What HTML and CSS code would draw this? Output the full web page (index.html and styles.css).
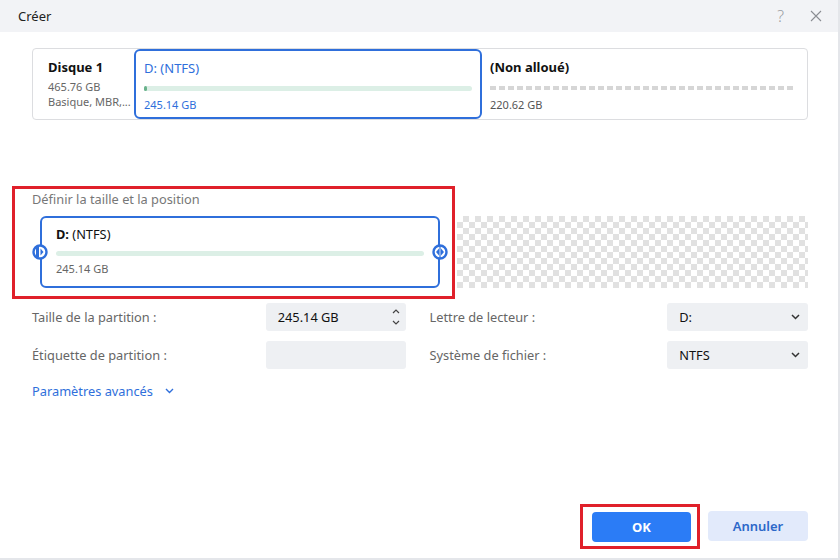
FILE: index.html
```html
<!DOCTYPE html>
<html lang="fr">
<head>
<meta charset="utf-8">
<link rel="stylesheet" href="styles.css">
</head>
<body>
<div class="dialog">
  <div class="titlebar">
    <span class="title">Créer</span>
    <div class="tb-icons">
      <span class="help">?</span>
      <svg class="close" width="12" height="12" viewBox="0 0 12 12"><path d="M1 1L11 11M11 1L1 11" stroke="#8a8d93" stroke-width="1.1" fill="none"/></svg>
    </div>
  </div>
  <div class="content">
    <div class="diskmap">
      <div class="disk-info">
        <div class="disk-name">Disque 1</div>
        <div class="disk-sub">465.76 GB</div>
        <div class="disk-sub">Basique, MBR,...</div>
      </div>
      <div class="part part-sel">
        <div class="part-name blue">D: (NTFS)</div>
        <div class="bar"><div class="bar-used"></div></div>
        <div class="part-size blue">245.14 GB</div>
      </div>
      <div class="part part-free">
        <div class="part-name bold">(Non alloué)</div>
        <div class="dashbar"></div>
        <div class="part-size">220.62 GB</div>
      </div>
    </div>

    <div class="resize-section">
      <div class="highlight">
        <div class="section-label">Définir la taille et la position</div>
      </div>
      <div class="resize-row">
        <div class="rcard">
          <svg class="handle h-left" width="16" height="16" viewBox="0 0 16 16"><circle cx="8" cy="8" r="6.5" fill="#fff" stroke="#2f6fdb" stroke-width="2.4"/><rect x="4" y="3" width="3" height="10" fill="#2f6fdb"/><path d="M8.5 4.5L11.5 8L8.5 11.5Z" fill="#2f6fdb"/></svg>
          <div class="rcard-name"><b>D:</b> (NTFS)</div>
          <div class="bar rbar"></div>
          <div class="rcard-size">245.14 GB</div>
          <svg class="handle h-right" width="16" height="16" viewBox="0 0 16 16"><circle cx="8" cy="8" r="6.5" fill="#fff" stroke="#2f6fdb" stroke-width="2.4"/><path d="M7 4.5L4 8L7 11.5Z" fill="#2f6fdb"/><path d="M9 4.5L12 8L9 11.5Z" fill="#2f6fdb"/><rect x="7.4" y="1" width="1.2" height="14" fill="#2f6fdb"/></svg>
        </div>
        <div class="checker"></div>
      </div>
    </div>

    <div class="form">
      <div class="frow">
        <span class="flabel">Taille de la partition :</span>
        <div class="field spin">
          <span>245.14 GB</span>
          <svg width="8" height="18" viewBox="0 0 8 18"><path d="M1 5L4 2L7 5M1 13L4 16L7 13" stroke="#444" stroke-width="1.2" fill="none"/></svg>
        </div>
        <span class="flabel flabel2">Lettre de lecteur :</span>
        <div class="field select">
          <span>D:</span>
          <svg width="9" height="6" viewBox="0 0 9 6"><path d="M1 1L4.5 4.5L8 1" stroke="#333" stroke-width="1.5" fill="none"/></svg>
        </div>
      </div>
      <div class="frow">
        <span class="flabel">Étiquette de partition :</span>
        <div class="field"></div>
        <span class="flabel flabel2">Système de fichier :</span>
        <div class="field select">
          <span>NTFS</span>
          <svg width="9" height="6" viewBox="0 0 9 6"><path d="M1 1L4.5 4.5L8 1" stroke="#333" stroke-width="1.5" fill="none"/></svg>
        </div>
      </div>
      <div class="adv">
        <span>Paramètres avancés</span>
        <svg width="9" height="6" viewBox="0 0 9 6"><path d="M1 1L4.5 4.5L8 1" stroke="#2f6fdb" stroke-width="1.4" fill="none"/></svg>
      </div>
    </div>

    <div class="footer">
      <div class="ok-wrap"><button class="btn btn-ok">OK</button></div>
      <button class="btn btn-cancel">Annuler</button>
    </div>
  </div>
</div>
</body>
</html>
```
FILE: styles.css
```css
* { box-sizing: border-box; }
html, body { margin: 0; padding: 0; }
body {
  width: 840px; height: 560px; overflow: hidden;
  font-family: "Noto Sans", "Open Sans", sans-serif;
  font-size: 12.8px; color: #222; background: #fff;
}
.dialog {
  width: 840px; height: 560px; display: flex; flex-direction: column;
  border-right: 2px solid #e4e6ea; border-bottom: 2px solid #e4e6ea;
}
.titlebar {
  height: 32px; flex: none; background: #f2f3f6;
  display: flex; align-items: center; justify-content: space-between;
  padding: 0 16px 0 18px;
}
.title { font-size: 13px; color: #222; }
.tb-icons { display: flex; align-items: center; gap: 26px; }
.help { font-size: 16px; color: #9a9da3; font-weight: 300; }
.content { flex: 1; padding: 16px 30px 0 32px; display: flex; flex-direction: column; position: relative; }

.diskmap {
  height: 72px; border: 1px solid #dcdde0; border-radius: 4px;
  display: flex; align-items: stretch;
}
.disk-info { width: 101px; padding: 9px 0 0 15px; }
.disk-name { font-weight: 700; font-size: 13px; color: #111; margin-bottom: 3px; }
.disk-sub { font-size: 11px; color: #666; line-height: 15px; white-space: nowrap; }
.part { padding: 8px 8px 0 8px; }
.part-sel {
  width: 348px; border: 2px solid #2f6fdb; border-radius: 6px;
}
.part-free { flex: 1; padding: 9px 12px 0 8px; }
.part-name { font-size: 13px; height: 19px; }
.blue { color: #2f6fdb; }
.bold { font-weight: 700; color: #111; }
.bar { height: 5px; background: #dcefe6; border-radius: 3px; margin: 8px 0 0 0; }
.bar-used { width: 3px; height: 5px; background: #6ab28c; border-radius: 2px; }
.part-size { font-size: 11px; margin-top: 6px; color: #555; }
.part-sel .part-size { color: #2f6fdb; }
.dashbar {
  height: 4px; margin-top: 9px;
  background: repeating-linear-gradient(90deg, #d6d6d6 0 6px, transparent 6px 9px);
}
.part-free .part-size { margin-top: 7px; }

.resize-section { position: relative; margin-top: 66px; margin-left: -20px; padding-left: 20px; }
.highlight {
  position: absolute; left: 0; top: 0; width: 443px; height: 113px;
  border: 3px solid #e0202a; pointer-events: none;
}
.section-label { position: absolute; left: 17px; top: 1px; color: #777; }
.resize-row { display: flex; padding-top: 30px; margin-left: -12px; }
.rcard {
  position: relative; width: 400px; height: 72px; margin-left: 20px;
  border: 2px solid #2f6fdb; border-radius: 6px; padding: 7px 14px 0 14px;
}
.rcard-name { color: #111; height: 18px; }
.rcard-name b { font-weight: 700; }
.rbar { margin-top: 8px; }
.rcard-size { font-size: 11px; color: #666; margin-top: 5px; }
.handle { position: absolute; top: 26px; }
.h-left { left: -10px; }
.h-right { right: -10px; }
.checker {
  width: 351px; height: 72px; margin-left: 17px;
  background-color: #fff;
  background-image:
    linear-gradient(45deg, #e1e1e1 25%, transparent 25%, transparent 75%, #e1e1e1 75%),
    linear-gradient(45deg, #e1e1e1 25%, transparent 25%, transparent 75%, #e1e1e1 75%);
  background-size: 12px 12px;
  background-position: 0 0, 6px 6px;
}

.form { margin-top: 15px; display: flex; flex-direction: column; gap: 10px; }
.frow { display: flex; align-items: center; height: 28px; }
.flabel { width: 234px; color: #666; }
.flabel2 { width: 238px; margin-left: 24px; }
.field {
  width: 140px; height: 28px; background: #eef0f3; border-radius: 3px;
  display: flex; align-items: center; justify-content: space-between;
  padding: 0 10px 0 12px; color: #111;
}
.spin { padding-right: 6px; }
.select { width: 141px; padding-right: 8px; }
.adv { display: flex; align-items: center; gap: 12px; color: #2f6fdb; margin-top: 2px; height: 20px; }

.footer { margin-top: auto; display: flex; justify-content: flex-end; gap: 8px; padding-bottom: 17px; }
.ok-wrap { border: 3px solid #e0202a; padding: 5px 6px 4px 9px; margin: -7px 0 -8px; }
.btn {
  width: 100px; height: 30px; border: none; border-radius: 4px;
  font-family: inherit; font-size: 13px; cursor: pointer;
}
.btn-ok { background: #2b7cf6; color: #fff; font-weight: 700; width: 99px; }
.btn-cancel { background: #e2eafb; color: #2c68c9; font-weight: 600; }
```
